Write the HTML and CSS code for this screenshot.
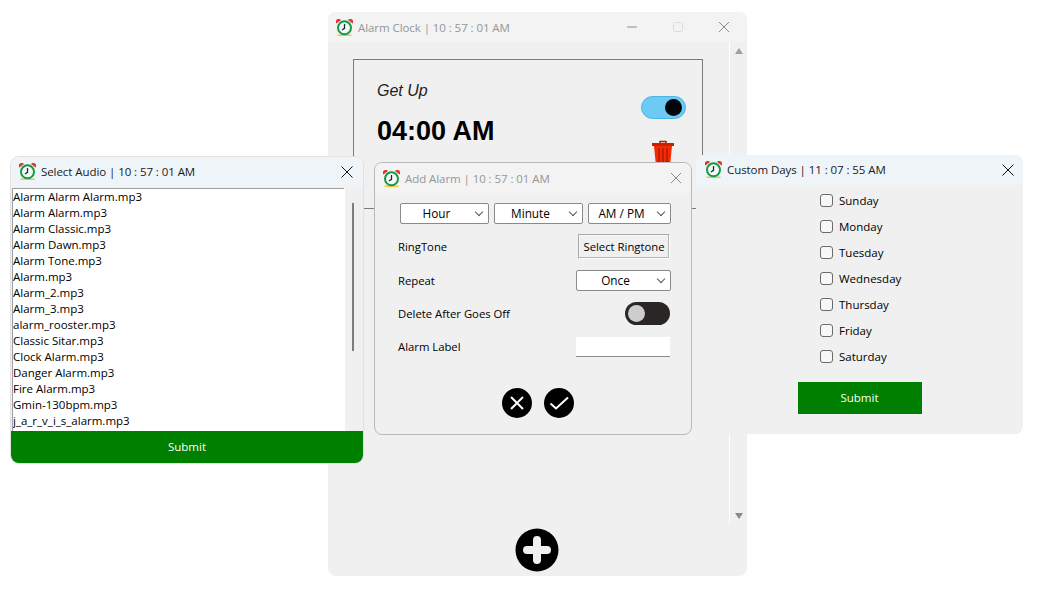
FILE: index.html
```html
<!DOCTYPE html>
<html lang="en">

<head>
    <meta charset="UTF-8">
    <title>Alarm Clock</title>
    <link rel="stylesheet" href="styles.css">
</head>

<body>
    <svg class="defs" width="0" height="0">
        <symbol id="clock" viewBox="0 0 17 17">
            <path d="M.5 4.500A2.800 2.800 0 0 1 5 1Z M16.500 4.500A2.800 2.800 0 0 0 12 1Z" fill="#e2372b" />
            <path d="M1.500 16.200h14" stroke="#f3c832" stroke-width="1.400" />
            <circle cx="8.500" cy="8.800" r="6.500" fill="#f6f8f4" stroke="#12994a" stroke-width="2" />
            <path d="M8.500 5V9.300L6 11" fill="none" stroke="#1c2a3a" stroke-width="1.300" />
        </symbol>
    </svg>

    <!-- main window -->
    <section class="window main-window">
        <header class="titlebar titlebar-idle">
            <svg class="app-icon"><use href="#clock" /></svg>
            <span class="title">Alarm Clock | 10 : 57 : 01 AM</span>
            <div class="win-controls">
                <svg width="12" height="12" viewBox="0 0 12 12"><path d="M1 6h10" stroke="#8a8a8a" /></svg>
                <svg width="12" height="12" viewBox="0 0 12 12"><rect x="1.500" y="1.500" width="9" height="9" rx="1" fill="none" stroke="#dcdcdc" /></svg>
                <svg width="12" height="12" viewBox="0 0 12 12"><path d="M1 1l10 10M11 1L1 11" stroke="#8a8a8a" /></svg>
            </div>
        </header>
        <div class="main-body">
            <div class="main-scroll">
                <div class="alarm-card">
                    <div class="alarm-text">
                        <div class="alarm-label">Get Up</div>
                        <div class="alarm-time">04:00 AM</div>
                    </div>
                    <div class="alarm-actions">
                        <div class="switch-on"><span></span></div>
                        <svg class="trash" width="24" height="26" viewBox="0 0 24 26">
                            <path d="M9 3V1.500h6V3" fill="none" stroke="#b01800" stroke-width="1.500" />
                            <path d="M1 3h22v3H1z" fill="#c92000" />
                            <path d="M3 6h18l-2 20H5z" fill="#f42a00" />
                            <path d="M8 8v16M12 8v16M16 8v16" stroke="#a81800" stroke-width="1.300" />
                        </svg>
                    </div>
                </div>
            </div>
            <div class="main-scrollbar">
                <span class="arrow-up"></span>
                <span class="arrow-down"></span>
            </div>
            <button class="add-btn">
                <svg width="44" height="44" viewBox="0 0 44 44">
                    <circle cx="22" cy="22" r="21.500" fill="#000" />
                    <path d="M22 12v20M12 22h20" stroke="#f0f0f0" stroke-width="8" stroke-linecap="round" />
                </svg>
            </button>
        </div>
    </section>

    <!-- select audio -->
    <section class="window audio-window">
        <header class="titlebar titlebar-blue">
            <svg class="app-icon"><use href="#clock" /></svg>
            <span class="title">Select Audio | 10 : 57 : 01 AM</span>
            <svg class="close" width="12" height="12" viewBox="0 0 12 12"><path d="M.5.500l11 11M11.500.500l-11 11" stroke="#111" /></svg>
        </header>
        <div class="audio-body">
            <ul class="audio-list">
                <li>Alarm Alarm Alarm.mp3</li>
                <li>Alarm Alarm.mp3</li>
                <li>Alarm Classic.mp3</li>
                <li>Alarm Dawn.mp3</li>
                <li>Alarm Tone.mp3</li>
                <li>Alarm.mp3</li>
                <li>Alarm_2.mp3</li>
                <li>Alarm_3.mp3</li>
                <li>alarm_rooster.mp3</li>
                <li>Classic Sitar.mp3</li>
                <li>Clock Alarm.mp3</li>
                <li>Danger Alarm.mp3</li>
                <li>Fire Alarm.mp3</li>
                <li>Gmin-130bpm.mp3</li>
                <li>j_a_r_v_i_s_alarm.mp3</li>
            </ul>
            <div class="audio-scrollbar"><span></span></div>
        </div>
        <button class="submit submit-full">Submit</button>
    </section>

    <!-- custom days -->
    <section class="window days-window">
        <header class="titlebar titlebar-blue">
            <svg class="app-icon"><use href="#clock" /></svg>
            <span class="title">Custom Days | 11 : 07 : 55 AM</span>
            <svg class="close" width="12" height="12" viewBox="0 0 12 12"><path d="M.5.500l11 11M11.500.500l-11 11" stroke="#111" /></svg>
        </header>
        <div class="days-body">
            <div class="days-list">
                <label class="day"><span class="check"></span>Sunday</label>
                <label class="day"><span class="check"></span>Monday</label>
                <label class="day"><span class="check"></span>Tuesday</label>
                <label class="day"><span class="check"></span>Wednesday</label>
                <label class="day"><span class="check"></span>Thursday</label>
                <label class="day"><span class="check"></span>Friday</label>
                <label class="day"><span class="check"></span>Saturday</label>
            </div>
            <button class="submit submit-small">Submit</button>
        </div>
    </section>

    <!-- add alarm -->
    <section class="window add-window">
        <header class="titlebar titlebar-idle">
            <svg class="app-icon"><use href="#clock" /></svg>
            <span class="title">Add Alarm | 10 : 57 : 01 AM</span>
            <svg class="close" width="12" height="12" viewBox="0 0 12 12"><path d="M1 1l10 10M11 1L1 11" stroke="#8a8a8a" /></svg>
        </header>
        <div class="add-body">
            <div class="time-row">
                <div class="combo combo-time">Hour</div>
                <div class="combo combo-time">Minute</div>
                <div class="combo combo-ampm">AM / PM</div>
            </div>
            <div class="form-row row-ringtone">
                <span>RingTone</span>
                <button class="ringtone-btn">Select Ringtone</button>
            </div>
            <div class="form-row row-repeat">
                <span>Repeat</span>
                <div class="combo combo-repeat">Once</div>
            </div>
            <div class="form-row row-delete">
                <span>Delete After Goes Off</span>
                <div class="switch-off"><span></span></div>
            </div>
            <div class="form-row row-label">
                <span class="label-text">Alarm Label</span>
                <div class="text-input"></div>
            </div>
            <div class="add-actions">
                <svg width="30" height="30" viewBox="0 0 30 30">
                    <circle cx="15" cy="15" r="15" fill="#000" />
                    <path d="M9 9l12 12M21 9L9 21" stroke="#fff" stroke-width="2" />
                </svg>
                <svg width="30" height="30" viewBox="0 0 30 30">
                    <circle cx="15" cy="15" r="15" fill="#000" />
                    <path d="M6.500 15.500l5.500 5L24 9.500" fill="none" stroke="#fff" stroke-width="2" />
                </svg>
            </div>
        </div>
    </section>
</body>

</html>
```

FILE: styles.css
```css
/* General Styles */
body {
    margin: 0;
    background-color: #ffffff;
    font-family: 'Open Sans', 'Noto Sans', sans-serif;
    font-size: 11.3px;
    color: #000000;
    height: 592px;
    overflow: hidden;
}

.defs {
    display: block;
    height: 0;
}

/* Windows sit on a free desktop */
.window {
    position: absolute;
    box-sizing: border-box;
    background-color: #f0f0f0;
    display: flex;
    flex-direction: column;
    border-radius: 8px;
    overflow: hidden;
}

.main-window {
    left: 328px;
    top: 12px;
    width: 419px;
    height: 564px;
}

.audio-window {
    left: 11px;
    top: 157px;
    width: 352px;
    height: 306px;
    box-shadow: 0 0 0 1px #e2e2e2;
}

.days-window {
    left: 696px;
    top: 155px;
    width: 327px;
    height: 279px;
}

.add-window {
    left: 374px;
    top: 162px;
    width: 318px;
    height: 273px;
    border: 1px solid #b9b9b9;
}

/* Title bars */
.titlebar {
    flex: none;
    display: flex;
    align-items: center;
    height: 30px;
    padding: 0 8px;
    box-sizing: border-box;
    font-size: 11.5px;
    letter-spacing: -0.07px;
}

.titlebar-idle {
    background-color: #f3f3f3;
    color: #969696;
}

.titlebar-blue {
    background-color: #eff4f9;
    color: #1a1a1a;
    padding-bottom: 1px;
}

.days-window .titlebar {
    padding-left: 9px;
}

.app-icon {
    width: 17px;
    height: 17px;
    margin-right: 5px;
    flex: none;
}

.title {
    flex: 1;
    white-space: nowrap;
}

.close {
    flex: none;
    margin-right: 2px;
}

.days-window .close,
.add-window .close {
    margin-right: 1px;
}

.win-controls {
    display: flex;
    gap: 34px;
    margin-right: 9px;
}

/* Main window */
.main-body {
    flex: 1;
    display: grid;
    grid-template-columns: 402px 17px;
    grid-template-rows: 1fr 53px;
    min-height: 0;
}

.main-scroll {
    padding: 17px 0 0 25px;
    border-right: 1px solid #ffffff;
    margin-bottom: -1px;
}

.alarm-card {
    box-sizing: border-box;
    width: 350px;
    height: 150px;
    border: 1px solid #7a7a7a;
    display: flex;
    justify-content: space-between;
    padding: 22px 16px 0 23px;
}

.alarm-label {
    font-family: 'Liberation Sans', Arial, sans-serif;
    font-style: italic;
    font-size: 16px;
    line-height: 18px;
    color: #222222;
}

.alarm-time {
    font-family: 'Liberation Sans', Arial, sans-serif;
    font-weight: bold;
    font-size: 27px;
    line-height: 31px;
    margin-top: 16px;
}

.alarm-actions {
    display: flex;
    flex-direction: column;
    align-items: flex-end;
    gap: 21px;
    padding-top: 14px;
}

.switch-on {
    box-sizing: border-box;
    width: 45px;
    height: 23px;
    border-radius: 12px;
    background-color: #6ccaf5;
    border: 1px solid #4fb4e4;
    display: flex;
    justify-content: flex-end;
    align-items: center;
    padding-right: 3px;
}

.switch-on span {
    width: 17px;
    height: 17px;
    border-radius: 50%;
    background-color: #030608;
}

.trash {
    margin-right: 11px;
}

.main-scrollbar {
    grid-row: 1 / 3;
    grid-column: 2;
    display: flex;
    flex-direction: column;
    justify-content: space-between;
    align-items: center;
    height: 477px;
    padding-top: 6px;
    box-sizing: border-box;
}

.arrow-up,
.arrow-down {
    width: 0;
    height: 0;
    border-left: 4px solid transparent;
    border-right: 4px solid transparent;
}

.arrow-up {
    border-bottom: 6px solid #a0a0a0;
}

.arrow-down {
    border-top: 6px solid #8a8a8a;
}

.add-btn {
    grid-row: 2;
    grid-column: 1;
    border: none;
    background: none;
    padding: 0;
    margin: 0 0 0 187px;
    width: 44px;
    height: 44px;
    align-self: center;
}

.add-btn svg {
    display: block;
}

/* Select audio */
.audio-body {
    flex: 1;
    display: flex;
    min-height: 0;
    padding-top: 1px;
}

.audio-list {
    list-style: none;
    margin: 0 0 0 1px;
    padding: 0;
    width: 332px;
    background-color: #ffffff;
    border-top: 1px solid #a0a0a0;
    border-left: 1px solid #a0a0a0;
    box-sizing: border-box;
    overflow: hidden;
    font-size: 11.5px;
}

.audio-list li {
    height: 16px;
    line-height: 16px;
    white-space: nowrap;
}

.audio-scrollbar {
    flex: 1;
    border-left: 1px solid #ffffff;
    padding: 15px 0 0 7px;
}

.audio-scrollbar span {
    display: block;
    width: 2px;
    height: 148px;
    background-color: #7d7d7d;
}

.submit {
    border: none;
    background-color: #008000;
    color: #ffffff;
    font-family: inherit;
    font-size: 11.5px;
    padding: 0 0 2px;
}

.submit-full {
    flex: none;
    height: 32px;
    width: 100%;
}

.submit-small {
    display: block;
    width: 124px;
    height: 32px;
    margin: 13px auto 0;
}

/* Custom days */
.days-body {
    padding-top: 2px;
}

.days-list {
    display: flex;
    flex-direction: column;
    padding-left: 124px;
    font-size: 11.5px;
}

.day {
    display: flex;
    align-items: center;
    height: 26px;
}

.check {
    box-sizing: border-box;
    width: 13px;
    height: 13px;
    border: 1px solid #6a6a6a;
    border-radius: 3px;
    margin-right: 6px;
    background-color: #f7f7f7;
}

/* Add alarm */
.add-body {
    flex: 1;
    padding: 10px 21px 0 23px;
}

.time-row {
    display: flex;
    gap: 5px;
    margin-left: 2px;
    font-size: 11.8px;
}

.combo {
    flex: none;
    box-sizing: border-box;
    height: 21px;
    line-height: 19px;
    background-color: #ffffff;
    border: 1px solid #8a8a8a;
    border-radius: 2px;
    text-align: center;
    padding-right: 16px;
    position: relative;
}

.combo::after {
    content: "";
    position: absolute;
    right: 6px;
    top: 5px;
    width: 5px;
    height: 5px;
    border-right: 1px solid #555;
    border-bottom: 1px solid #555;
    transform: rotate(45deg);
}

.combo-time {
    width: 89px;
}

.combo-ampm {
    width: 83px;
}

.combo-repeat {
    width: 95px;
    margin-right: -1px;
    font-size: 11.8px;
}

.form-row {
    display: flex;
    justify-content: space-between;
    align-items: center;
}

.row-ringtone {
    margin-top: 10px;
    height: 25px;
}

.row-repeat {
    margin-top: 11px;
    height: 21px;
}

.row-delete {
    margin-top: 11px;
    height: 23px;
}

.row-label {
    margin-top: 12px;
    height: 20px;
}

.label-text {
    margin-bottom: 2px;
}

.ringtone-btn {
    box-sizing: border-box;
    width: 92px;
    height: 25px;
    padding: 0;
    background-color: #f0f0f0;
    border: 1px solid #a8a8a8;
    border-right-color: #ffffff;
    border-bottom-color: #ffffff;
    box-shadow: inset -1px -1px #b5b5b5, inset 1px 1px #f8f8f8;
    font-family: inherit;
    font-size: 11.3px;
    white-space: nowrap;
}

.switch-off {
    box-sizing: border-box;
    width: 45px;
    height: 23px;
    border-radius: 12px;
    background-color: #2a2626;
    display: flex;
    align-items: center;
    padding-left: 3px;
}

.switch-off span {
    width: 17px;
    height: 17px;
    border-radius: 50%;
    background-color: #cdcdcd;
}

.text-input {
    box-sizing: border-box;
    width: 94px;
    height: 20px;
    background-color: #ffffff;
    border-bottom: 1px solid #8a8a8a;
}

.add-actions {
    display: flex;
    justify-content: center;
    gap: 12px;
    margin-top: 31px;
    margin-left: 8px;
}
```
